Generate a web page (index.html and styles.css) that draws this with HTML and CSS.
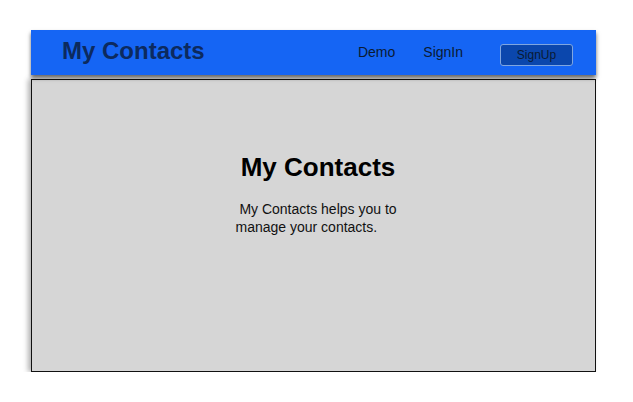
FILE: index.html
```html
<!DOCTYPE html>
<html>
<head>
<meta charset="utf-8">
<link rel="stylesheet" href="styles.css">
</head>
<body>
<div class="page">
  <header class="topbar">
    <div class="brand">My Contacts</div>
    <nav class="nav">
      <a class="nav-link">Demo</a>
      <a class="nav-link">SignIn</a>
      <button class="signup">SignUp</button>
    </nav>
  </header>
  <main class="hero">
    <h1 class="hero-title">My Contacts</h1>
    <p class="hero-text">&nbsp;My Contacts helps you to manage your contacts.</p>
  </main>
</div>
</body>
</html>
```
FILE: styles.css
```css
html, body {
  margin: 0;
  padding: 0;
  background: #ffffff;
}
body {
  font-family: "Liberation Sans", Arial, sans-serif;
}
.page {
  width: 565px;
  padding: 30px 0 0 31px;
}
.topbar {
  position: relative;
  z-index: 2;
  height: 45px;
  background: #1565f4;
  display: flex;
  align-items: center;
  box-shadow: 0 3px 4px rgba(0, 0, 0, 0.6);
}
.brand {
  margin-left: 31px;
  font-size: 24px;
  font-weight: bold;
  color: #0c2a5e;
  margin-top: -4px;
}
.nav {
  margin-left: auto;
  display: flex;
  align-items: center;
  margin-right: 23px;
  margin-top: -2px;
}
.nav-link {
  font-size: 14px;
  color: #0a1a33;
  margin-right: 28px;
}
.nav-link + .nav-link {
  margin-right: 37px;
}
.signup {
  width: 73px;
  height: 22px;
  margin-top: 6px;
  background: #0b47ad;
  border: 1px solid #7fa6e0;
  border-radius: 3px;
  font-family: "Liberation Sans", Arial, sans-serif;
  font-size: 12px;
  color: #0a1a33;
  padding: 0;
}
.hero {
  position: relative;
  z-index: 1;
  margin-top: 4px;
  height: 291px;
  background: #d6d6d6;
  border: 1px solid #111;
  box-shadow: -3px 0 5px rgba(0, 0, 0, 0.3);
  display: flex;
  flex-direction: column;
  align-items: center;
}
.hero-title {
  margin: 72px 0 0 9px;
  font-size: 26px;
  font-weight: bold;
  color: #000;
  line-height: 30px;
}
.hero-text {
  margin: 18px 0 0 9px;
  width: 165px;
  font-size: 14px;
  line-height: 18px;
  color: #111;
}
```
